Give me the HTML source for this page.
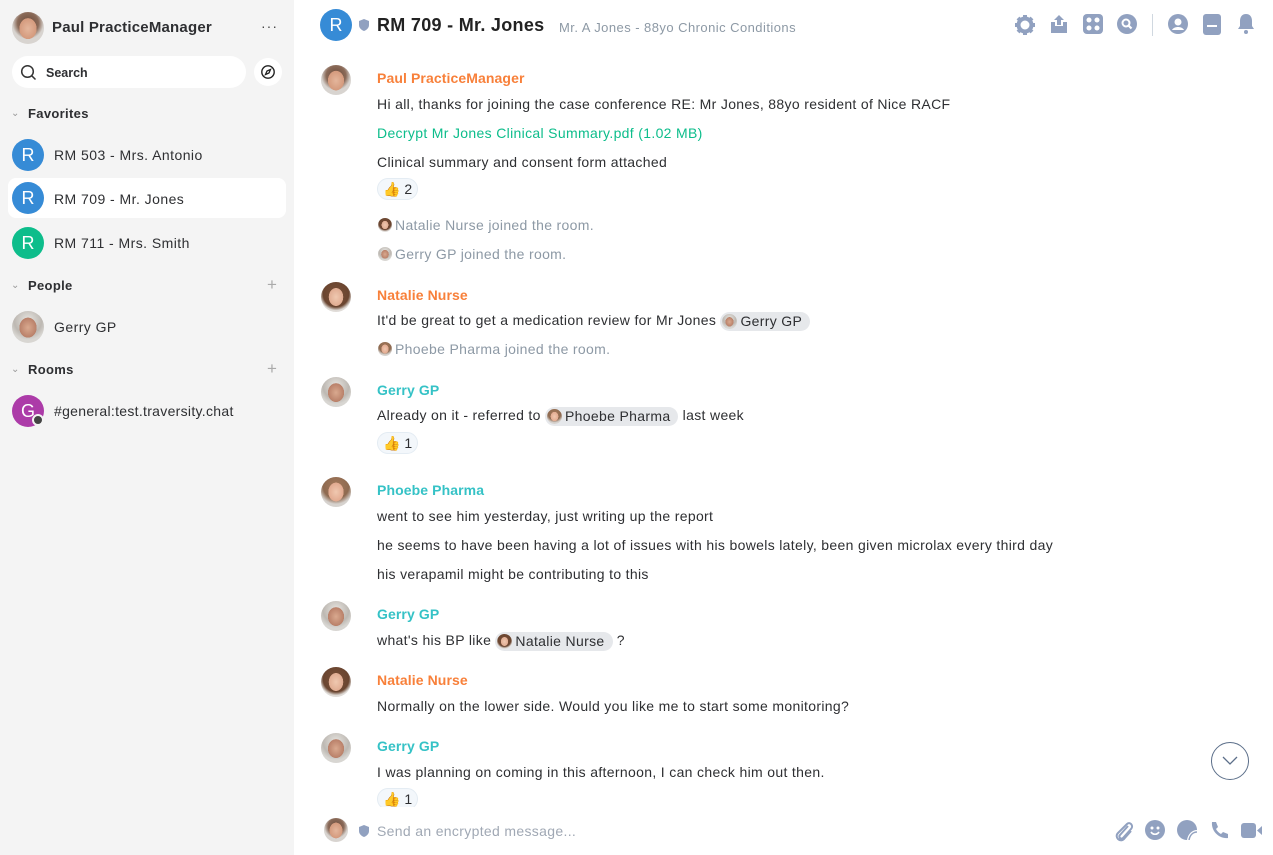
<!DOCTYPE html>
<html><head><meta charset="utf-8"><style>
*{box-sizing:border-box;margin:0;padding:0}
body{width:1273px;height:855px;overflow:hidden;font-family:"Liberation Sans",sans-serif;color:#2e2f32;background:#fff;position:relative}
.side{position:absolute;left:0;top:0;width:294px;height:855px;background:#f4f4f4}
.a{position:absolute}
.t{position:absolute;white-space:nowrap;font-size:14px;line-height:20px;letter-spacing:0.33px}
.av{position:absolute;border-radius:50%;overflow:hidden;background:radial-gradient(ellipse 38% 46% at 50% 52%,#e4b69c 0,#d49a7d 70%,transparent 72%),radial-gradient(circle at 50% 35%,#6b4a3a 0,#8a6a58 40%,#d8d4d0 60%)}
.av.g{background:radial-gradient(ellipse 38% 44% at 50% 52%,#d9a98f 0,#b98069 70%,transparent 72%),radial-gradient(circle at 50% 30%,#e8e6e2 0,#bdb8b2 50%,#d8d6d2 70%)}
.av.n{background:radial-gradient(ellipse 34% 42% at 50% 50%,#efc8b0 0,#e0ac92 70%,transparent 72%),radial-gradient(circle at 50% 40%,#7a5038 0,#6a4530 55%,#e0dcd8 70%)}
.av.p{background:radial-gradient(ellipse 36% 44% at 50% 50%,#f0c8b0 0,#e2aa90 70%,transparent 72%),radial-gradient(circle at 50% 30%,#a4785a 0,#8e6a50 50%,#d6d2ce 70%)}
.r{position:absolute;border-radius:50%;color:#fff;text-align:center;font-size:18px}
.name{font-weight:bold;font-size:14px;letter-spacing:0.1px}
.or{color:#f8803a}.tl{color:#35c2c6}
.gray{color:#8d99a5}
.pill{display:inline-block;background:#e6e8eb;border-radius:10px;padding:0 8px 0 2px;line-height:19px;vertical-align:middle}
.pill i{display:inline-block;width:15px;height:15px;border-radius:50%;vertical-align:-3px;margin-right:3px}
.react{position:absolute;height:22px;border:1px solid #e4ecf3;background:#f3f7fb;border-radius:11px;font-size:14px;line-height:20px;padding:0 5px 0 5px}
.ic{position:absolute}
</style></head><body>
<div class="side"></div>
<!-- sidebar -->
<div class="av" style="left:12px;top:12px;width:32px;height:32px"></div>
<div class="t" style="left:52px;top:18px;font-size:15px;font-weight:bold;letter-spacing:0.2px">Paul PracticeManager</div>
<div class="t" style="left:261px;top:16px;font-size:14px;color:#444;letter-spacing:1px">···</div>
<div class="a" style="left:12px;top:56px;width:234px;height:32px;background:#fff;border-radius:16px"></div>
<svg class="ic" style="left:20px;top:64px" width="17" height="17" viewBox="0 0 17 17"><circle cx="7.5" cy="7.5" r="5.8" fill="none" stroke="#333" stroke-width="1.5"/><path d="M11.8 11.8L15.5 15.5" stroke="#333" stroke-width="1.5"/></svg>
<div class="t" style="left:46px;top:63px;font-size:12.5px;font-weight:bold;letter-spacing:0">Search</div>
<div class="a" style="left:254px;top:58px;width:28px;height:28px;background:#fff;border-radius:50%"></div>
<svg class="ic" style="left:260px;top:64px" width="16" height="16" viewBox="0 0 16 16"><circle cx="8" cy="8" r="6.2" fill="none" stroke="#222" stroke-width="1.4"/><path d="M10.5 5.5L9 9 5.5 10.5 7 7z" fill="none" stroke="#222" stroke-width="1.3"/></svg>
<div class="t" style="left:11px;top:104px;font-size:10px;color:#999">⌄</div>
<div class="t" style="left:28px;top:104px;font-size:13px;font-weight:bold">Favorites</div>
<div class="r" style="left:12px;top:139px;width:32px;height:32px;line-height:32px;background:#368bd6">R</div>
<div class="t" style="left:54px;top:145px;letter-spacing:0.45px">RM 503 - Mrs. Antonio</div>
<div class="a" style="left:8px;top:178px;width:278px;height:40px;background:#fff;border-radius:8px"></div>
<div class="r" style="left:12px;top:182px;width:32px;height:32px;line-height:32px;background:#368bd6">R</div>
<div class="t" style="left:54px;top:189px;letter-spacing:0.45px">RM 709 - Mr. Jones</div>
<div class="r" style="left:12px;top:227px;width:32px;height:32px;line-height:32px;background:#0dbd8b">R</div>
<div class="t" style="left:54px;top:233px;letter-spacing:0.45px">RM 711 - Mrs. Smith</div>
<div class="t" style="left:11px;top:276px;font-size:10px;color:#999">⌄</div>
<div class="t" style="left:28px;top:276px;font-size:13px;font-weight:bold">People</div>
<div class="t" style="left:267px;top:275px;font-size:17px;color:#aaa">+</div>
<div class="av g" style="left:12px;top:311px;width:32px;height:32px"></div>
<div class="t" style="left:54px;top:317px;letter-spacing:0.45px">Gerry GP</div>
<div class="t" style="left:11px;top:360px;font-size:10px;color:#999">⌄</div>
<div class="t" style="left:28px;top:360px;font-size:13px;font-weight:bold">Rooms</div>
<div class="t" style="left:267px;top:359px;font-size:17px;color:#aaa">+</div>
<div class="r" style="left:12px;top:395px;width:32px;height:32px;line-height:32px;background:#ac3ba8">G</div>
<div class="a" style="left:32px;top:414px;width:12px;height:12px;border-radius:50%;background:#444;border:2px solid #f4f4f4"></div>
<div class="t" style="left:54px;top:401px;letter-spacing:0.3px">#general:test.traversity.chat</div>

<!-- header -->
<div class="r" style="left:320px;top:9px;width:32px;height:32px;line-height:32px;background:#368bd6">R</div>
<svg class="ic" style="left:359px;top:19px" width="10" height="12" viewBox="0 0 10 12"><path d="M5 0L10 2V6C10 9 7.5 11 5 12 2.5 11 0 9 0 6V2z" fill="#91a1c0"/></svg>
<div class="t" style="left:377px;top:13px;font-size:18px;line-height:24px;font-weight:bold;color:#222;letter-spacing:0.3px">RM 709 - Mr. Jones</div>
<div class="t" style="left:559px;top:18px;font-size:13px;color:#8d99a5;letter-spacing:0.45px">Mr. A Jones - 88yo Chronic Conditions</div>
<svg class="ic" style="left:1014px;top:14px" width="22" height="22" viewBox="0 0 22 22"><circle cx="11" cy="11" r="6.5" fill="none" stroke="#91a1c0" stroke-width="4"/><g stroke="#91a1c0" stroke-width="4"><path d="M11 1v4M11 17v4M1 11h4M17 11h4M4 4l3 3M15 15l3 3M4 18l3-3M15 7l3-3"/></g></svg>
<svg class="ic" style="left:1049px;top:13px" width="20" height="22" viewBox="0 0 20 22"><path d="M2 9h4v4h8V9h4v11H2z" fill="#91a1c0"/><path d="M10 2l5 5h-3v5H8V7H5z" fill="#91a1c0"/></svg>
<svg class="ic" style="left:1083px;top:14px" width="20" height="20" viewBox="0 0 20 20"><rect width="20" height="20" rx="4" fill="#91a1c0"/><circle cx="6" cy="6" r="2.5" fill="#fff"/><circle cx="14" cy="6" r="2.5" fill="#fff"/><circle cx="6" cy="14" r="2.5" fill="#fff"/><circle cx="14" cy="14" r="2.5" fill="#fff"/></svg>
<svg class="ic" style="left:1117px;top:14px" width="20" height="20" viewBox="0 0 20 20"><circle cx="10" cy="10" r="10" fill="#91a1c0"/><circle cx="9" cy="9" r="3.5" fill="none" stroke="#fff" stroke-width="2"/><path d="M11.5 11.5l3 3" stroke="#fff" stroke-width="2.2"/></svg>
<div class="a" style="left:1152px;top:14px;width:1px;height:22px;background:#d0d8e0"></div>
<svg class="ic" style="left:1168px;top:14px" width="20" height="20" viewBox="0 0 20 20"><circle cx="10" cy="10" r="10" fill="#91a1c0"/><circle cx="10" cy="8" r="3.5" fill="#fff"/><path d="M4 16c2-4 10-4 12 0" fill="#fff"/></svg>
<svg class="ic" style="left:1203px;top:14px" width="18" height="21" viewBox="0 0 18 21"><rect width="18" height="21" rx="3" fill="#91a1c0"/><rect x="4" y="11" width="10" height="2" fill="#fff"/></svg>
<svg class="ic" style="left:1237px;top:13px" width="18" height="22" viewBox="0 0 18 22"><path d="M9 1c4 0 6 3 6 7v5l2 3H1l2-3V8c0-4 2-7 6-7z" fill="#91a1c0"/><circle cx="9" cy="19" r="2" fill="#91a1c0"/></svg>

<!-- messages -->
<div class="av" style="left:321px;top:65px;width:30px;height:30px"></div>
<div class="t name or" style="left:377px;top:68px">Paul PracticeManager</div>
<div class="t" style="left:377px;top:94px">Hi all, thanks for joining the case conference RE: Mr Jones, 88yo resident of Nice RACF</div>
<div class="t" style="left:377px;top:123px;color:#0dbd8b">Decrypt Mr Jones Clinical Summary.pdf (1.02 MB)</div>
<div class="t" style="left:377px;top:152px">Clinical summary and consent form attached</div>
<div class="react" style="left:377px;top:178px">👍 2</div>
<div class="av n" style="left:378px;top:218px;width:14px;height:14px"></div>
<div class="t gray" style="left:395px;top:215px">Natalie Nurse joined the room.</div>
<div class="av g" style="left:378px;top:247px;width:14px;height:14px"></div>
<div class="t gray" style="left:395px;top:244px">Gerry GP joined the room.</div>

<div class="av n" style="left:321px;top:282px;width:30px;height:30px"></div>
<div class="t name or" style="left:377px;top:285px">Natalie Nurse</div>
<div class="t" style="left:377px;top:310px">It'd be great to get a medication review for Mr Jones <span class="pill"><i class="av g" style="position:relative"></i>Gerry GP</span></div>
<div class="av p" style="left:378px;top:342px;width:14px;height:14px"></div>
<div class="t gray" style="left:395px;top:339px">Phoebe Pharma joined the room.</div>

<div class="av g" style="left:321px;top:377px;width:30px;height:30px"></div>
<div class="t name tl" style="left:377px;top:380px">Gerry GP</div>
<div class="t" style="left:377px;top:405px">Already on it - referred to <span class="pill"><i class="av p" style="position:relative"></i>Phoebe Pharma</span> last week</div>
<div class="react" style="left:377px;top:432px">👍 1</div>

<div class="av p" style="left:321px;top:477px;width:30px;height:30px"></div>
<div class="t name tl" style="left:377px;top:480px">Phoebe Pharma</div>
<div class="t" style="left:377px;top:506px">went to see him yesterday, just writing up the report</div>
<div class="t" style="left:377px;top:535px">he seems to have been having a lot of issues with his bowels lately, been given microlax every third day</div>
<div class="t" style="left:377px;top:564px">his verapamil might be contributing to this</div>

<div class="av g" style="left:321px;top:601px;width:30px;height:30px"></div>
<div class="t name tl" style="left:377px;top:604px">Gerry GP</div>
<div class="t" style="left:377px;top:630px">what's his BP like <span class="pill"><i class="av n" style="position:relative"></i>Natalie Nurse</span> ?</div>

<div class="av n" style="left:321px;top:667px;width:30px;height:30px"></div>
<div class="t name or" style="left:377px;top:670px">Natalie Nurse</div>
<div class="t" style="left:377px;top:696px">Normally on the lower side. Would you like me to start some monitoring?</div>

<div class="av g" style="left:321px;top:733px;width:30px;height:30px"></div>
<div class="t name tl" style="left:377px;top:736px">Gerry GP</div>
<div class="t" style="left:377px;top:762px">I was planning on coming in this afternoon, I can check him out then.</div>
<div class="react" style="left:377px;top:788px">👍 1</div>

<div class="a" style="left:1211px;top:742px;width:38px;height:38px;border:1px solid #5c6f8a;border-radius:50%;background:#fff"></div>
<svg class="ic" style="left:1221px;top:755px" width="18" height="12" viewBox="0 0 18 12"><path d="M2 2l7 7 7-7" fill="none" stroke="#5c6f8a" stroke-width="1.3"/></svg>

<!-- composer -->
<div class="a" style="left:300px;top:807px;width:973px;height:48px;background:#fff"></div>
<div class="av" style="left:324px;top:818px;width:24px;height:24px"></div>
<svg class="ic" style="left:359px;top:825px" width="10" height="12" viewBox="0 0 10 12"><path d="M5 0L10 2V6C10 9 7.5 11 5 12 2.5 11 0 9 0 6V2z" fill="#91a1c0"/></svg>
<div class="t" style="left:377px;top:821px;color:#a0a8b4">Send an encrypted message...</div>
<svg class="ic" style="left:1114px;top:820px" width="20" height="22" viewBox="0 0 20 22"><path d="M14 6L6 15c-2 2 1 5 3 3l8-9c3-3-1-8-4-5L4 13c-4 4 2 10 6 6l7-8" fill="none" stroke="#91a1c0" stroke-width="2"/></svg>
<svg class="ic" style="left:1145px;top:820px" width="20" height="20" viewBox="0 0 20 20"><circle cx="10" cy="10" r="10" fill="#91a1c0"/><circle cx="7" cy="8" r="1.5" fill="#fff"/><circle cx="13" cy="8" r="1.5" fill="#fff"/><path d="M6 12c2 3 6 3 8 0" fill="none" stroke="#fff" stroke-width="1.6"/></svg>
<svg class="ic" style="left:1177px;top:820px" width="20" height="20" viewBox="0 0 20 20"><path d="M10 0a10 10 0 0 1 10 10c-5 0-9 4-10 10A10 10 0 0 1 10 0z" fill="#91a1c0"/><path d="M12 20c1-5 4-8 8-8" fill="none" stroke="#91a1c0" stroke-width="1.5"/></svg>
<svg class="ic" style="left:1210px;top:821px" width="19" height="19" viewBox="0 0 19 19"><path d="M2 1l4 0 2 5-2 2c1 2 3 4 5 5l2-2 5 2v4c-9 1-17-7-16-16z" fill="#91a1c0"/></svg>
<svg class="ic" style="left:1241px;top:823px" width="32" height="15" viewBox="0 0 32 15"><rect width="15" height="15" rx="3" fill="#91a1c0"/><path d="M16 7.5L21 3v9z" fill="#91a1c0"/></svg>
</body></html>
